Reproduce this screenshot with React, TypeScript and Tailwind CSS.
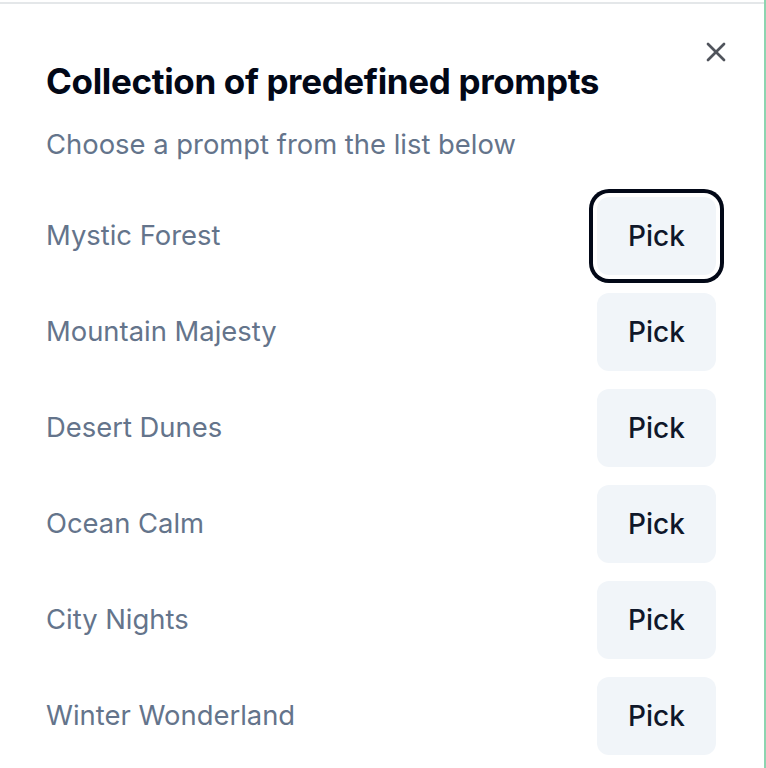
import { X } from "lucide-react";

const PROMPTS = [
  "Mystic Forest",
  "Mountain Majesty",
  "Desert Dunes",
  "Ocean Calm",
  "City Nights",
  "Winter Wonderland",
];

export default function App() {
  return (
    <div
      className="h-[768px] w-[766px] overflow-hidden border-r-2 border-[#8dd4b0] bg-white"
      style={{ fontFamily: "Inter, 'Noto Sans', sans-serif" }}
    >
      <div className="relative mt-[2px] h-full border-t-2 border-[#e4e7e9] pl-[46px] pr-[48px] pt-[57px]">
        <button className="absolute right-[32px] top-[32px] flex size-[32px] items-center justify-center text-[#50545c]">
          <X className="size-[32px]" strokeWidth={2} />
        </button>

        <h2 className="text-[35px] font-bold leading-[40px] tracking-[-0.01em] text-[#020817]">
          Collection of predefined prompts
        </h2>
        <p className="mt-[24px] text-[27.4px] leading-[38px] text-[#64748b]">
          Choose a prompt from the list below
        </p>

        <ul className="mt-[34px] flex flex-col gap-[18px]">
          {PROMPTS.map((name, i) => (
            <li key={name} className="flex items-center justify-between">
              <span className="text-[27.4px] text-[#64748b]">{name}</span>
              <button
                className={
                  i === 0
                    ? "h-[78px] w-[119px] rounded-[12px] bg-[#f1f5f9] text-[28px] font-medium text-[#0f172a] outline-none ring-[4px] ring-[#020817] ring-offset-[4px] ring-offset-white"
                    : "h-[78px] w-[119px] rounded-[12px] bg-[#f1f5f9] text-[28px] font-medium text-[#0f172a]"
                }
              >
                Pick
              </button>
            </li>
          ))}
        </ul>
      </div>
    </div>
  );
}
